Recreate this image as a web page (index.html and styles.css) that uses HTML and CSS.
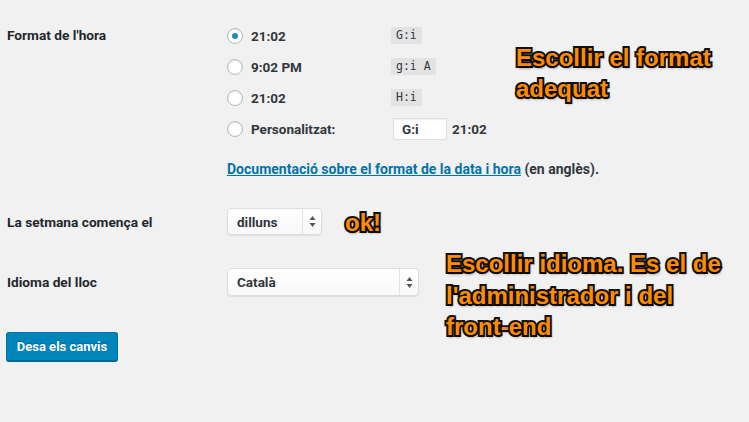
FILE: index.html
```html
<!DOCTYPE html>
<html lang="ca">
<head>
<meta charset="utf-8">
<title>Opcions generals</title>
<link rel="stylesheet" href="styles.css">
</head>
<body>
<div class="page">
  <div class="row row-time">
    <div class="label">Format de l'hora</div>
    <div class="field">
      <div class="opt"><span class="radio on"></span><span class="otext">21:02</span><code>G:i</code></div>
      <div class="opt"><span class="radio"></span><span class="otext">9:02 PM</span><code>g:i A</code></div>
      <div class="opt"><span class="radio"></span><span class="otext">21:02</span><code>H:i</code></div>
      <div class="opt"><span class="radio"></span><span class="otext">Personalitzat:</span><span class="input">G:i</span><span class="preview">21:02</span></div>
      <p class="doc"><a href="#">Documentació sobre el format de la data i hora</a> (en anglès).</p>
    </div>
  </div>
  <div class="row row-week">
    <div class="label">La setmana comença el</div>
    <div class="field">
      <div class="select sel-week"><span class="sel-val">dilluns</span><span class="sel-arrows"><svg width="7" height="13" viewBox="0 0 7 13"><path d="M3.5 1 L6.5 5 L0.5 5 Z M3.5 12 L6.5 8 L0.5 8 Z" fill="#555"/></svg></span></div>
    </div>
  </div>
  <div class="row row-lang">
    <div class="label">Idioma del lloc</div>
    <div class="field">
      <div class="select sel-lang"><span class="sel-val">Català</span><span class="sel-arrows"><svg width="7" height="13" viewBox="0 0 7 13"><path d="M3.5 1 L6.5 5 L0.5 5 Z M3.5 12 L6.5 8 L0.5 8 Z" fill="#555"/></svg></span></div>
    </div>
  </div>
  <div class="submit"><button class="btn">Desa els canvis</button></div>

  <div class="note note-format">Escollir el format<br>adequat</div>
  <div class="note note-ok">ok!</div>
  <div class="note note-lang">Escollir idioma. Es el de<br>l'administrador i del<br>front-end</div>
</div>
</body>
</html>
```

FILE: styles.css
```css
html, body {
  margin: 0;
  padding: 0;
  background: #f1f1f1;
}
body {
  font-family: Roboto, "Liberation Sans", sans-serif;
  font-size: 13px;
  color: #32373c;
  width: 749px;
  height: 422px;
  overflow: hidden;
}
.page {
  position: relative;
  height: 422px;
  padding: 20px 0 0 6px;
  box-sizing: border-box;
}
.row {
  display: flex;
}
.label {
  width: 221px;
  font-weight: 700;
  font-size: 13.7px;
  color: #23282d;
  padding-left: 1px;
  box-sizing: border-box;
}
.row-time .label {
  line-height: 31px;
}
.field {
  flex: 1;
}
.opt {
  display: flex;
  align-items: center;
  height: 31px;
}
.radio {
  width: 14px;
  height: 14px;
  border: 1px solid #b4b9be;
  border-radius: 50%;
  background: #fff;
  box-shadow: inset 0 1px 2px rgba(0,0,0,0.1);
  display: flex;
  align-items: center;
  justify-content: center;
  margin-right: 8px;
  flex: none;
}
.radio.on::after {
  content: "";
  width: 6px;
  height: 6px;
  border-radius: 50%;
  background: #1e8cbe;
}
.otext {
  width: 140px;
  font-weight: 700;
  font-size: 13.5px;
  color: #32373c;
}
code {
  font-family: "DejaVu Sans Mono", "Liberation Mono", monospace;
  font-size: 11.5px;
  background: #e3e3e3;
  padding: 2px 5px;
  line-height: 13px;
  color: #32373c;
}
.input {
  margin-left: 2px;
  width: 54px;
  height: 22px;
  box-sizing: border-box;
  border: 1px solid #ddd;
  background: #fff;
  box-shadow: inset 0 1px 2px rgba(0,0,0,0.07);
  padding-left: 8px;
  font-weight: 700;
  font-size: 13.5px;
  line-height: 20px;
  color: #32373c;
}
.preview {
  margin-left: 5px;
  font-weight: 700;
  font-size: 13.5px;
}
.doc {
  margin: 15px 0 0 0;
  line-height: 20px;
  font-weight: 700;
  font-size: 14px;
  color: #32373c;
}
.doc a {
  color: #0073aa;
  text-decoration: underline;
}
.row-week {
  margin-top: 29px;
  align-items: center;
}
.row-lang {
  margin-top: 33px;
  align-items: center;
}
.select {
  display: flex;
  align-items: stretch;
  height: 27px;
  box-sizing: border-box;
  border: 1px solid #dcdcdc;
  border-radius: 4px;
  background: linear-gradient(#fff, #f8f8f8);
  box-shadow: 0 1px 1px rgba(0,0,0,0.08);
}
.sel-week { width: 95px; }
.sel-lang { width: 192px; height: 28px; }
.sel-val {
  flex: 1;
  padding-left: 9px;
  display: flex;
  align-items: center;
  font-weight: 700;
  font-size: 13.5px;
  color: #32373c;
}
.sel-arrows {
  width: 18px;
  border-left: 1px solid #e2e2e2;
  display: flex;
  align-items: center;
  justify-content: center;
}
.submit {
  margin-top: 36px;
}
.btn {
  width: 112px;
  height: 29px;
  background: #0085ba;
  border: 1px solid #0073aa;
  border-bottom-color: #006799;
  border-radius: 3px;
  box-shadow: 0 1px 0 #006799;
  color: #fff;
  font-family: Roboto, "Liberation Sans", sans-serif;
  font-weight: 700;
  font-size: 13px;
  text-shadow: 0 -1px 1px #006799;
  padding: 0;
}
.note {
  position: absolute;
  font-family: "Liberation Sans", Arial, sans-serif;
  font-weight: 700;
  font-size: 24px;
  line-height: 31px;
  color: #ff8c00;
  -webkit-text-stroke: 4px #111;
  paint-order: stroke fill;
  text-shadow: 1px 2px 3px rgba(0,0,0,0.55);
  white-space: nowrap;
}
.note-format { left: 516px; top: 42px; }
.note-ok { left: 345px; top: 207px; }
.note-lang { left: 446px; top: 248px; line-height: 31.5px; }
```
